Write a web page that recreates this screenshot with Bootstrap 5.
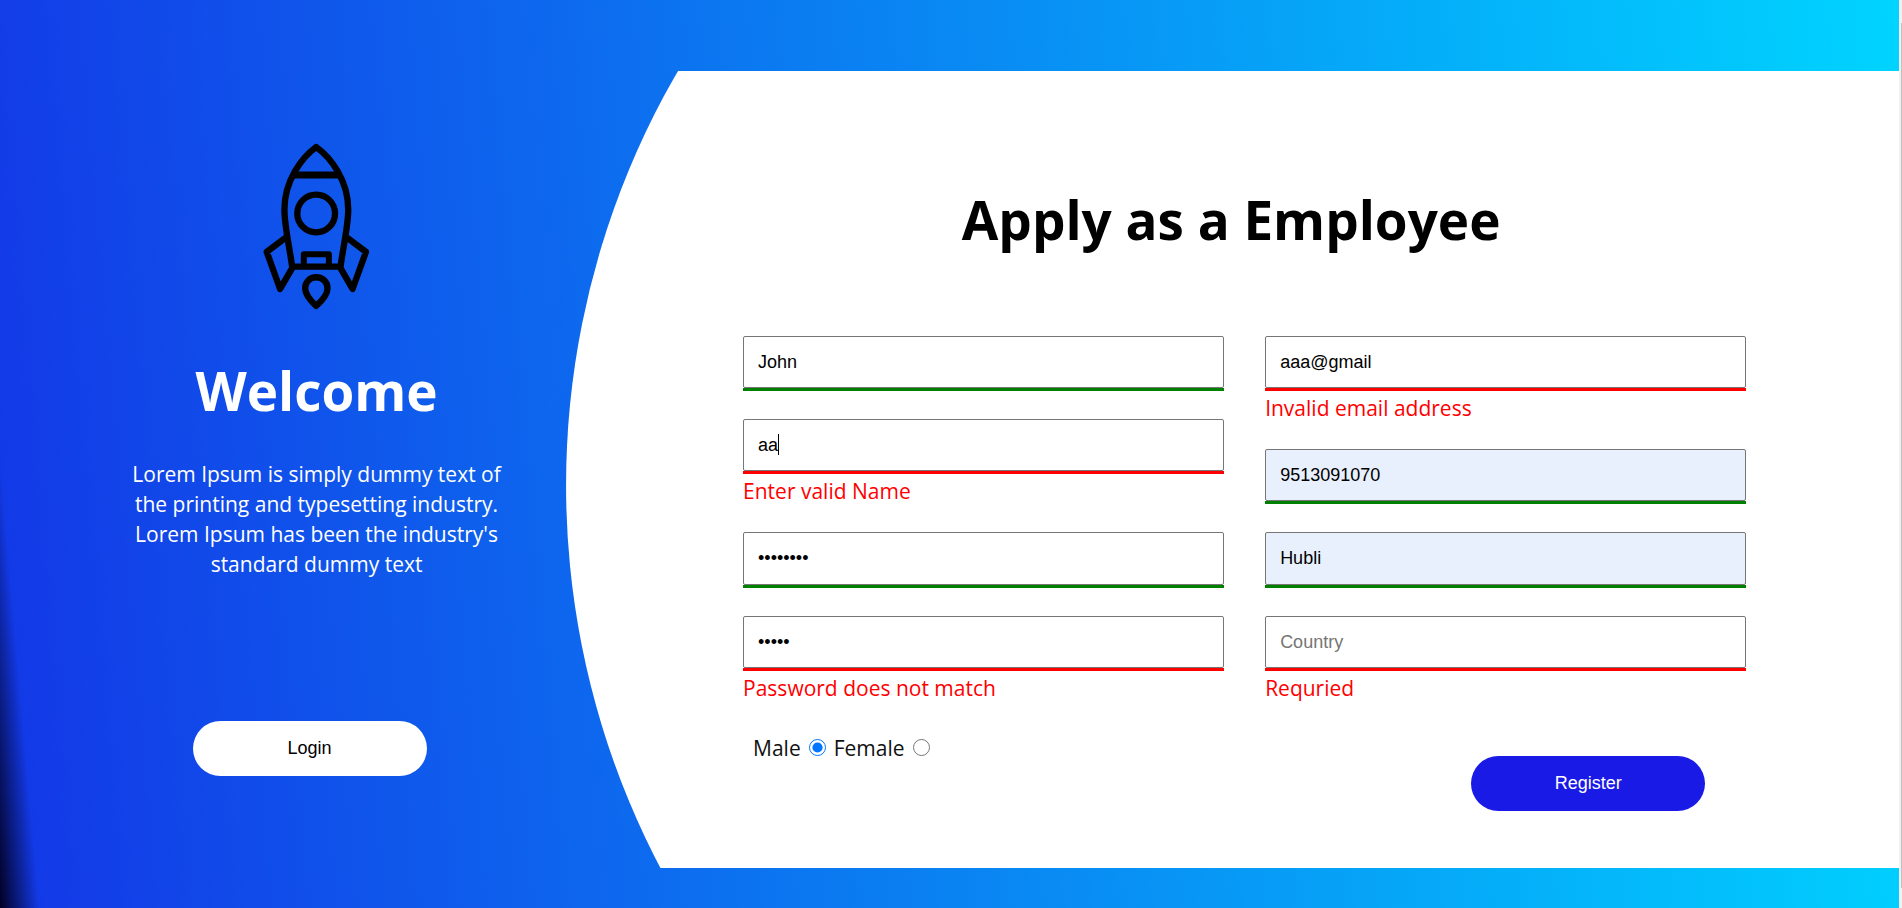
<!DOCTYPE html>
<html lang="en">
<head>
<meta charset="utf-8">
<meta name="viewport" content="width=device-width, initial-scale=1">
<title>Apply as a Employee</title>
<link href="https://cdn.jsdelivr.net/npm/bootstrap@5.3.0/dist/css/bootstrap.min.css" rel="stylesheet">
<style>
  body { font-family: "Open Sans", "Noto Sans", sans-serif; font-size: 21px; line-height: 30px; color: #111; background: #f1f1f1; }
  .page-bg { background: linear-gradient(85deg, #020024 0%, #133ae7 2%, #00d4ff 100%); padding: 71px 0 40px; overflow: hidden; }
  .scroll-rail { width: 3px; padding: 23px 0 20px 2px; background: #f1f1f1; }
  .scroll-thumb { background: #c1c1c1; }
  .big-title { font-size: 53px; line-height: 74px; font-weight: 700; }
  .intro { padding: 72px 120px 0; }
  .intro .big-title { margin: 44px 0 31px; }
  .intro p { margin-bottom: 142px; }
  .pill { width: 234px; height: 55px; border: 0; border-radius: 28px; font: 18px "Liberation Sans", Arial, sans-serif; }
  .pill-login { background: #fff; color: #000; margin-right: 14px; }
  .pill-register { background: #1a1ae6; color: #fff; margin: 27px 41px 0 0; }
  .panel { position: relative; padding: 112px 153px 56px 110px; }
  .panel::before { content: ""; position: absolute; inset: 0 0 0 -67px; background: #fff; clip-path: ellipse(62% 103.5% at 62% 52%); }
  .panel > * { position: relative; }
  .panel .big-title { color: #000; margin: 0 27px 79px 0; }
  .fields { column-gap: 41px; }
  .fields > div { flex: 1 1 0; min-width: 0; gap: 28px; }
  .field-line { border-bottom: 3px solid; position: relative; }
  .is-ok { border-color: green; }
  .is-bad { border-color: red; }
  .field-line input { display: block; width: 100%; height: 52px; padding: 0 14px; border: 1px solid #767676; border-radius: 2px; background: #fff; color: #000; font: 18px "Liberation Sans", Arial, sans-serif; outline: 0; }
  .field-line input.tall { height: 53px; }
  .field-line input::placeholder { color: #757575; opacity: 1; }
  .field-line input.filled { background: #e8f0fe; }
  .text-caret { position: absolute; left: 35px; top: 15px; width: 1px; height: 21px; background: #000; }
  .error-text { color: red; line-height: 34px; margin-bottom: -4px; }
  .gender { padding: 2px 0 0 10px; gap: 8px; }
  .gender label { padding-top: 2px; }
  .gender input { width: 17px; height: 17px; margin: 0; }
</style>
</head>
<body>
<div class="d-flex min-vh-100">
  <main class="page-bg flex-grow-1">
    <div class="row g-0 h-100">
      <section class="col-4 intro text-white text-center d-flex flex-column align-items-center">
        <svg width="107" height="167" viewBox="100 70 320 500" fill="none" stroke="#000" stroke-width="19" stroke-linejoin="round" stroke-linecap="round" aria-hidden="true">
          <path d="M259 82C217 113 164 181 164 269C164 320 180 385 187 440H332C339 385 355 320 355 269C355 181 302 113 259 82Z"/>
          <path d="M194 166H325" stroke-width="21"/>
          <circle cx="259" cy="281" r="56.500"/>
          <path d="M222 436V403H297V436" stroke-width="18"/>
          <path d="M169 352L111 396L151 507L188 443M350 352L408 396L368 507L331 443"/>
          <path d="M259 472C240 472 226 486 226 505C226 524 243 543 259 558C276 543 293 524 293 505C293 486 278 472 259 472Z"/>
        </svg>
        <h1 class="big-title">Welcome</h1>
        <p>Lorem Ipsum is simply dummy text of the printing and typesetting industry. Lorem Ipsum has been the industry's standard dummy text</p>
        <button type="button" class="pill pill-login">Login</button>
      </section>
      <section class="col-8 panel">
        <h2 class="big-title text-center">Apply as a Employee</h2>
        <form class="fields d-flex" novalidate>
          <div class="d-flex flex-column">
            <div><div class="field-line is-ok"><input type="text" aria-label="First name" value="John"></div></div>
            <div>
              <div class="field-line is-bad"><input type="text" aria-label="Last name" value="aa"><span class="text-caret"></span></div>
              <div class="error-text">Enter valid Name</div>
            </div>
            <div><div class="field-line is-ok"><input class="tall" type="password" aria-label="Password" value="password"></div></div>
            <div>
              <div class="field-line is-bad"><input type="password" aria-label="Confirm password" value="passw"></div>
              <div class="error-text">Password does not match</div>
            </div>
            <div class="gender d-flex align-items-center">
              <label for="male">Male</label><input type="radio" id="male" name="gender" checked>
              <label for="female">Female</label><input type="radio" id="female" name="gender">
            </div>
          </div>
          <div class="d-flex flex-column">
            <div>
              <div class="field-line is-bad"><input type="email" aria-label="Email" value="aaa@gmail"></div>
              <div class="error-text">Invalid email address</div>
            </div>
            <div><div class="field-line is-ok"><input class="filled" type="tel" aria-label="Phone" value="9513091070"></div></div>
            <div><div class="field-line is-ok"><input class="filled tall" type="text" aria-label="City" value="Hubli"></div></div>
            <div>
              <div class="field-line is-bad"><input type="text" aria-label="Country" placeholder="Country"></div>
              <div class="error-text">Requried</div>
            </div>
            <button type="submit" class="pill pill-register align-self-end">Register</button>
          </div>
        </form>
      </section>
    </div>
  </main>
  <div class="scroll-rail d-flex" aria-hidden="true"><div class="scroll-thumb flex-grow-1"></div></div>
</div>
<script src="https://cdn.jsdelivr.net/npm/bootstrap@5.3.0/dist/js/bootstrap.bundle.min.js"></script>
</body>
</html>
